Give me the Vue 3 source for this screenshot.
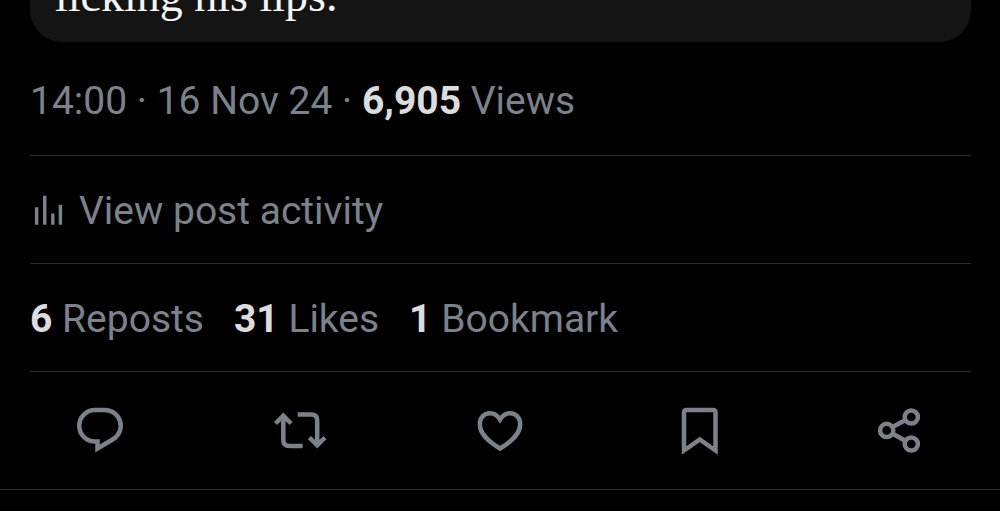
<script setup>
const stats = [
  { count: '6', label: 'Reposts' },
  { count: '31', label: 'Likes' },
  { count: '1', label: 'Bookmark' },
]

const actions = [
  {
    label: 'Reply',
    paths: ['M25 10H35A15.75 15.75 0 0 1 43 39.3L27.5 48.5V41.5H25A15.75 15.75 0 0 1 25 10Z'],
  },
  {
    label: 'Repost',
    paths: [
      'M5.5 23.5L13.3 15.7L21.1 23.5M13.3 16V40Q13.3 46 19.3 46H32.7',
      'M27.7 14.6H41.2Q47.2 14.6 47.2 20.6V44.5M39.4 37.5L47.2 45.3L55 37.5',
    ],
  },
  {
    label: 'Like',
    paths: [
      'M30 19.5C27.3 15.2 23.8 13.2 20 13.2C14 13.2 9.8 18 9.8 24C9.8 34 18 41.2 30 48.5C42 41.2 50.2 34 50.2 24C50.2 18 46 13.2 40 13.2C36.2 13.2 32.7 15.2 30 19.5Z',
    ],
  },
  {
    label: 'Bookmark',
    paths: ['M14 50.5V12.5Q14 10 16.5 10H43Q45.5 10 45.5 12.5V50.5L29.8 39.5Z'],
  },
  {
    label: 'Share',
    paths: ['M22.5 27L35.5 20M22.5 33.5L35.5 41'],
    circles: [
      [16.7, 30.4],
      [41.3, 17],
      [41.3, 44],
    ],
  },
]
</script>

<template>
  <main class="post">
    <div class="body">
      <blockquote class="quote">licking his lips.</blockquote>
      <p class="row meta">
        <time datetime="2024-11-16T14:00">14:00 · 16 Nov 24</time> · <strong>6,905</strong> Views
      </p>
      <a class="row activity" href="#activity">
        <svg class="bars" viewBox="0 0 40 40" aria-hidden="true">
          <path d="M7 16V34.5M15.5 4V34.5M24 22.5V34.5M32 13.5V34.5" />
        </svg>
        <span>View post activity</span>
      </a>
      <div class="row stats">
        <a v-for="s in stats" :key="s.label" :href="'#' + s.label.toLowerCase()">
          <strong>{{ s.count }}</strong> {{ s.label }}
        </a>
      </div>
    </div>
    <div class="actions">
      <button v-for="a in actions" :key="a.label" type="button" :aria-label="a.label">
        <svg viewBox="0 0 60 60" aria-hidden="true">
          <path v-for="d in a.paths" :key="d" :d="d" />
          <circle v-for="c in a.circles" :key="c[1]" :cx="c[0]" :cy="c[1]" r="6.6" />
        </svg>
      </button>
    </div>
  </main>
</template>

<style>
body {
  background: #000;
}
</style>

<style scoped>
.post {
  overflow: hidden;
  background: #000;
  color: #7b828a;
  font-family: Roboto, sans-serif;
  font-size: 39px;
  line-height: 48px;
}
.body {
  padding: 0 29px 0 30px;
}
.quote {
  display: flex;
  align-items: flex-end;
  box-sizing: border-box;
  height: 42px;
  margin: 0;
  padding: 0 25px 22px;
  border-radius: 0 0 32px 32px;
  background: #141414;
  color: #f4f4f4;
  font-family: "Liberation Serif", serif;
  font-size: 46px;
}
.row {
  margin: 0;
  padding: 31px 0 28px;
  border-bottom: 1px solid #2c2c2d;
  white-space: nowrap;
}
.meta {
  padding: 35px 0 30px;
}
a {
  color: inherit;
  text-decoration: none;
}
strong {
  color: #dcdcdc;
  font-weight: 700;
}
.activity {
  display: flex;
  align-items: center;
  gap: 11px;
}
svg {
  display: block;
  fill: none;
  stroke: currentColor;
  stroke-width: 4.5;
}
.bars {
  width: 38px;
  height: 38px;
  stroke-width: 3.6;
}
.stats {
  display: flex;
  gap: 30px;
}
.actions {
  display: grid;
  grid-template-columns: repeat(5, 1fr);
  padding: 28px 0 29px;
  border-bottom: 1px solid #2c2c2d;
}
button {
  display: flex;
  justify-content: center;
  padding: 0;
  border: 0;
  background: none;
  color: inherit;
  cursor: pointer;
}
button svg {
  width: 60px;
  height: 60px;
}
</style>
